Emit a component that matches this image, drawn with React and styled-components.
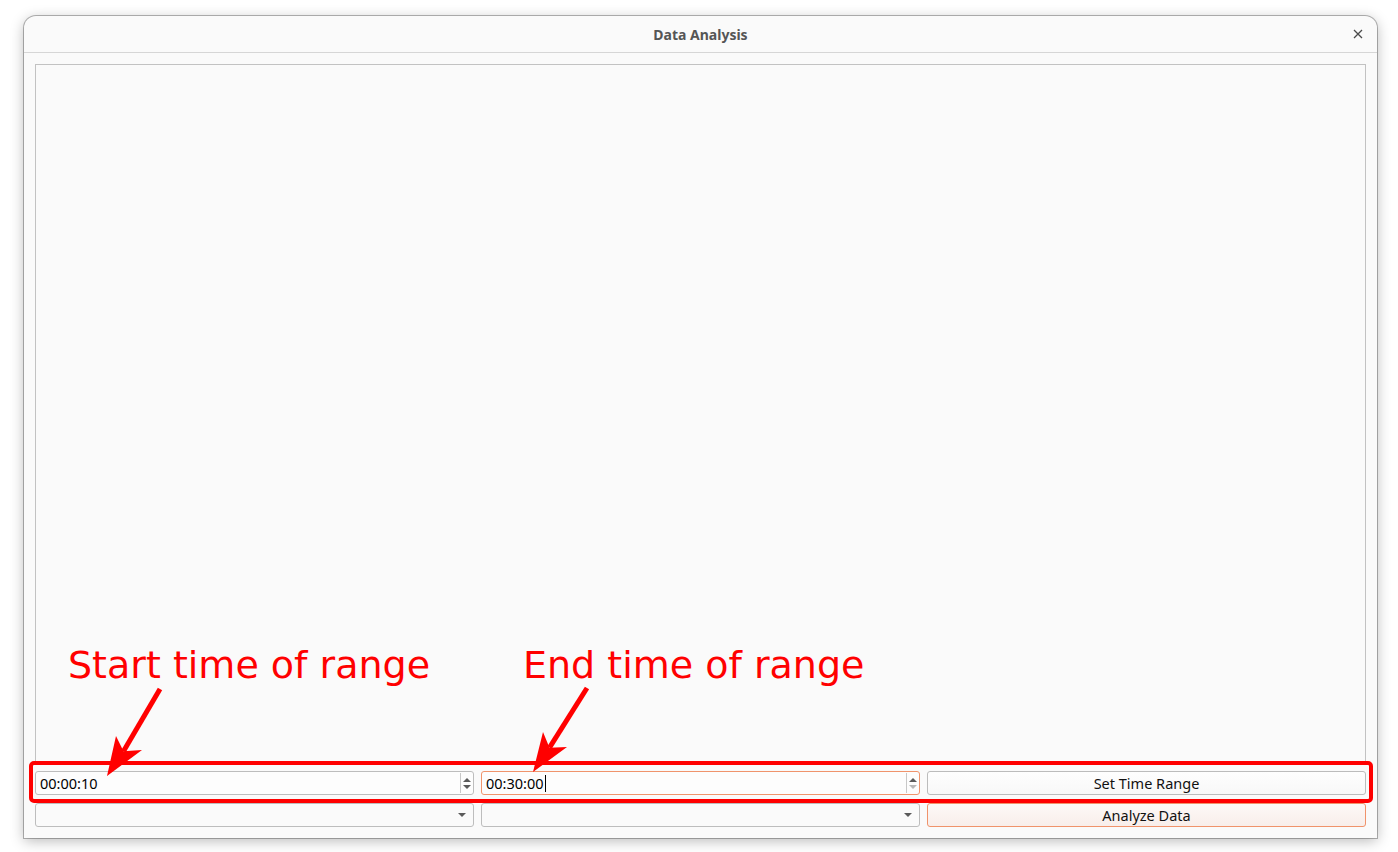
import React from 'react'
import styled, { createGlobalStyle } from 'styled-components'

const GlobalStyle = createGlobalStyle`
  html, body {
    margin: 0;
    padding: 0;
    background: #ffffff;
  }
  body {
    font-family: "Noto Sans", "DejaVu Sans", sans-serif;
  }
`

const Page = styled.div`
  position: relative;
  width: 1398px;
  height: 852px;
  padding: 16px 21px 14px 24px;
  box-sizing: border-box;
  display: flex;
`
const Window = styled.div`
  flex: 1;
  display: flex;
  flex-direction: column;
  background: #fafafa;
  border-radius: 12px 12px 0 0;
  box-shadow: 0 0 0 1px rgba(0, 0, 0, 0.28), 0 3px 14px rgba(0, 0, 0, 0.28);
  overflow: hidden;
`
const TitleBar = styled.div`
  position: relative;
  height: 36px;
  flex: none;
  display: flex;
  align-items: center;
  justify-content: center;
  border-bottom: 1px solid #d6d6d6;
  font-size: 14px;
  font-weight: 700;
  color: #555;
`
const CloseButton = styled.div`
  position: absolute;
  right: 12px;
  top: 11px;
  width: 14px;
  height: 14px;
  display: flex;
  align-items: center;
  justify-content: center;
`
const Body = styled.div`
  flex: 1;
  display: flex;
  flex-direction: column;
  gap: 6px;
  padding: 11px;
`
const PlotFrame = styled.div`
  flex: 1;
  border: 1px solid #c2c2c2;
  background: #fafafa;
`
const Controls = styled.div`
  display: grid;
  grid-template-columns: 1fr 1fr 1fr;
  grid-auto-rows: 24px;
  column-gap: 7px;
  row-gap: 8px;
`
const Field = styled.div`
  display: flex;
  align-items: stretch;
  box-sizing: border-box;
  border: 1px solid ${p => (p.$focused ? '#f0946c' : '#bdbdbd')};
  border-radius: 3px;
  background: ${p => (p.$flat ? '#fafafa' : '#fdfdfd')};
  font-size: 14.5px;
  color: #000;
`
const FieldText = styled.div`
  flex: 1;
  display: flex;
  align-items: center;
  padding-left: 4px;
`
const Caret = styled.span`
  display: inline-block;
  width: 1px;
  height: 17px;
  background: #000;
  margin-left: 1px;
`
const SpinButtons = styled.div`
  width: 12px;
  border-left: 1px solid #c8c8c8;
  display: flex;
  flex-direction: column;
  align-items: center;
  justify-content: center;
  gap: 3px;
  margin: 1px 0;
`
const Arrow = styled.span`
  width: 0;
  height: 0;
  border-left: 4px solid transparent;
  border-right: 4px solid transparent;
  ${p => (p.$up ? 'border-bottom' : 'border-top')}: 4px solid ${p => (p.$muted ? '#b8b8b8' : '#5a5a5a')};
`
const DropArrow = styled.div`
  width: 22px;
  display: flex;
  align-items: center;
  justify-content: center;
`
const Button = styled.div`
  box-sizing: border-box;
  display: flex;
  align-items: center;
  justify-content: center;
  border: 1px solid ${p => (p.$accent ? '#f0936b' : '#bcbcbc')};
  border-radius: 3px;
  background: ${p =>
    p.$accent
      ? 'linear-gradient(#fdf9f7, #f8eeea)'
      : 'linear-gradient(#fefefe, #f8f8f8)'};
  font-size: 14.5px;
  color: #111;
`
const Note = styled.div`
  position: absolute;
  font-family: "DejaVu Sans", sans-serif;
  font-size: 38px;
  line-height: 1;
  color: #ff0000;
  white-space: nowrap;
`
const Highlight = styled.div`
  position: absolute;
  left: 29px;
  top: 761px;
  width: 1344px;
  height: 42px;
  box-sizing: border-box;
  border: 4px solid #ff0000;
  border-radius: 5px;
`
const Overlay = styled.svg`
  position: absolute;
  left: 0;
  top: 0;
  pointer-events: none;
`

const SpinBox = ({ value, focused, caret }) => (
  <Field $focused={focused}>
    <FieldText>
      {value}
      {caret && <Caret />}
    </FieldText>
    <SpinButtons>
      <Arrow $up />
      <Arrow $muted={focused} />
    </SpinButtons>
  </Field>
)

const ComboBox = () => (
  <Field $flat>
    <FieldText />
    <DropArrow>
      <Arrow />
    </DropArrow>
  </Field>
)

// shaft plus a notched head, tip pointing at the field
const Pointer = ({ x1, y1, tip, b1, b2 }) => {
  const mx = (b1[0] + b2[0]) / 2
  const my = (b1[1] + b2[1]) / 2
  const nx = mx + (tip[0] - mx) * 0.25
  const ny = my + (tip[1] - my) * 0.25
  return (
    <g>
      <line x1={x1} y1={y1} x2={nx} y2={ny} stroke="#ff0000" strokeWidth="5" />
      <polygon
        points={`${tip[0]},${tip[1]} ${b1[0]},${b1[1]} ${nx},${ny} ${b2[0]},${b2[1]}`}
        fill="#ff0000"
      />
    </g>
  )
}

const App = () => {
  return (
    <Page>
      <GlobalStyle />
      <Window>
        <TitleBar>
          Data Analysis
          <CloseButton>
            <svg width="10" height="10" viewBox="0 0 10 10">
              <path d="M1 1 L9 9 M9 1 L1 9" stroke="#4a4a4a" strokeWidth="1.3" />
            </svg>
          </CloseButton>
        </TitleBar>
        <Body>
          <PlotFrame />
          <Controls>
            <SpinBox value="00:00:10" />
            <SpinBox value="00:30:00" focused caret />
            <Button>Set Time Range</Button>
            <ComboBox />
            <ComboBox />
            <Button $accent>Analyze Data</Button>
          </Controls>
        </Body>
      </Window>

      <Note style={{ left: 68, top: 646 }}>Start time of range</Note>
      <Note style={{ left: 523, top: 646 }}>End time of range</Note>
      <Highlight />
      <Overlay width="1398" height="852">
        <Pointer x1={160} y1={689} tip={[107, 776]} b1={[116, 736]} b2={[142, 750]} />
        <Pointer x1={587} y1={688} tip={[533, 772]} b1={[543, 732]} b2={[567, 747]} />
      </Overlay>
    </Page>
  )
}

export default App
